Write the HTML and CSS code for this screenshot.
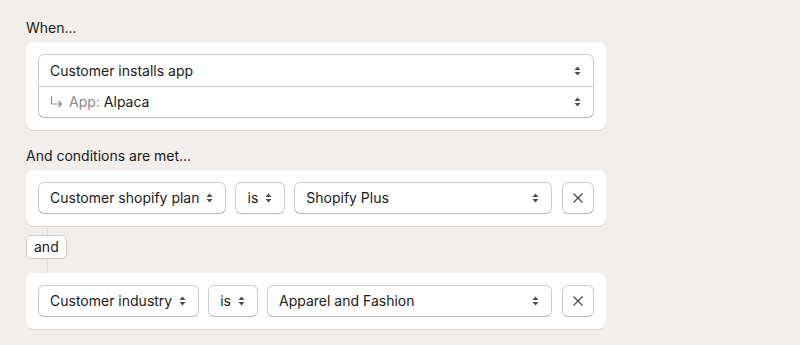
FILE: index.html
```html
<!DOCTYPE html>
<html lang="en">
  <head>
    <meta charset="UTF-8" />
    <meta name="viewport" content="width=device-width, initial-scale=1.0" />
    <title>Workflow trigger</title>
    <link rel="stylesheet" href="styles.css">
  </head>
  <body>
    <div class="builder">
      <div class="section">
        <div class="section-label">When...</div>
        <div class="card">
          <div class="stack">
            <div class="stack-row">
              <span class="stack-text">Customer installs app</span>
              <svg class="updown" width="7" height="10" viewBox="0 0 7 10"><path d="M0.5 4 L3.5 0.5 L6.5 4 Z M0.5 6 L3.5 9.5 L6.5 6 Z" fill="#4a4a4a"/></svg>
            </div>
            <div class="stack-row">
              <span class="stack-text">
                <svg class="hook" width="13" height="12" viewBox="0 0 13 12"><path d="M1.5 0.5 V8 H11.5 M8.5 5 L11.5 8 L8.5 11" fill="none" stroke="#8a8a8a" stroke-width="1.2"/></svg>
                <span class="muted">App:</span> Alpaca
              </span>
              <svg class="updown" width="7" height="10" viewBox="0 0 7 10"><path d="M0.5 4 L3.5 0.5 L6.5 4 Z M0.5 6 L3.5 9.5 L6.5 6 Z" fill="#4a4a4a"/></svg>
            </div>
          </div>
        </div>
      </div>

      <div class="section">
        <div class="section-label">And conditions are met...</div>
        <div class="card condition">
          <div class="select">Customer shopify plan
            <svg class="updown" width="7" height="10" viewBox="0 0 7 10"><path d="M0.5 4 L3.5 0.5 L6.5 4 Z M0.5 6 L3.5 9.5 L6.5 6 Z" fill="#4a4a4a"/></svg>
          </div>
          <div class="select">is
            <svg class="updown" width="7" height="10" viewBox="0 0 7 10"><path d="M0.5 4 L3.5 0.5 L6.5 4 Z M0.5 6 L3.5 9.5 L6.5 6 Z" fill="#4a4a4a"/></svg>
          </div>
          <div class="select grow">Shopify Plus
            <svg class="updown" width="7" height="10" viewBox="0 0 7 10"><path d="M0.5 4 L3.5 0.5 L6.5 4 Z M0.5 6 L3.5 9.5 L6.5 6 Z" fill="#4a4a4a"/></svg>
          </div>
          <button class="remove" type="button">
            <svg width="12" height="12" viewBox="0 0 12 12"><path d="M1.5 1.5 L10.5 10.5 M10.5 1.5 L1.5 10.5" stroke="#4a4a4a" stroke-width="1.3"/></svg>
          </button>
        </div>

        <div class="joiner">
          <span class="and-pill">and</span>
        </div>

        <div class="card condition">
          <div class="select">Customer industry
            <svg class="updown" width="7" height="10" viewBox="0 0 7 10"><path d="M0.5 4 L3.5 0.5 L6.5 4 Z M0.5 6 L3.5 9.5 L6.5 6 Z" fill="#4a4a4a"/></svg>
          </div>
          <div class="select">is
            <svg class="updown" width="7" height="10" viewBox="0 0 7 10"><path d="M0.5 4 L3.5 0.5 L6.5 4 Z M0.5 6 L3.5 9.5 L6.5 6 Z" fill="#4a4a4a"/></svg>
          </div>
          <div class="select grow">Apparel and Fashion
            <svg class="updown" width="7" height="10" viewBox="0 0 7 10"><path d="M0.5 4 L3.5 0.5 L6.5 4 Z M0.5 6 L3.5 9.5 L6.5 6 Z" fill="#4a4a4a"/></svg>
          </div>
          <button class="remove" type="button">
            <svg width="12" height="12" viewBox="0 0 12 12"><path d="M1.5 1.5 L10.5 10.5 M10.5 1.5 L1.5 10.5" stroke="#4a4a4a" stroke-width="1.3"/></svg>
          </button>
        </div>
      </div>
    </div>
  </body>
</html>
```

FILE: styles.css
```css
body {
  font-family: "Inter", "Liberation Sans", sans-serif;
  font-size: 14px;
  line-height: 20px;
  color: #1a1a1a;
  background-color: #f1eeec;
  margin: 0;
}

.builder {
  width: 580px;
  padding: 18px 26px 8px;
}

.section {
  margin-bottom: 16px;
}

.section:last-child {
  margin-bottom: 0;
}

.section-label {
  margin-bottom: 4px;
}

.card {
  background-color: #fff;
  border-radius: 8px;
  padding: 12px;
  box-shadow: 0 1px 0 #dcd8d5;
}

.stack {
  border: 1px solid #cccccc;
  border-bottom-color: #b8b8b8;
  border-radius: 6px;
}

.stack-row {
  display: flex;
  align-items: center;
  justify-content: space-between;
  height: 31px;
  padding: 0 12px 0 11px;
}

.stack-row + .stack-row {
  height: 30px;
  border-top: 1px solid #cccccc;
}

.stack-text {
  display: flex;
  align-items: center;
}

.hook {
  margin-right: 6px;
}

.muted {
  color: #8a8a8a;
  margin-right: 4px;
}

.condition {
  display: flex;
  gap: 9px;
}

.select {
  display: flex;
  align-items: center;
  justify-content: space-between;
  gap: 7px;
  height: 30px;
  padding: 0 12px 0 11px;
  border: 1px solid #cccccc;
  border-bottom-color: #b8b8b8;
  border-radius: 6px;
  white-space: nowrap;
}

.select.grow {
  flex: 1;
}

.remove {
  width: 32px;
  height: 32px;
  margin-left: 1px;
  padding: 0;
  display: flex;
  align-items: center;
  justify-content: center;
  background-color: #fff;
  border: 1px solid #cccccc;
  border-bottom-color: #b8b8b8;
  border-radius: 6px;
  cursor: pointer;
}

.joiner {
  height: 47px;
  background: linear-gradient(#dedad7, #dedad7) no-repeat 21px 0 / 1px 100%;
}

.and-pill {
  display: inline-block;
  margin-top: 9px;
  padding: 1px 7px;
  line-height: 20px;
  background-color: #fff;
  border: 1px solid #cccccc;
  border-radius: 5px;
}
```
